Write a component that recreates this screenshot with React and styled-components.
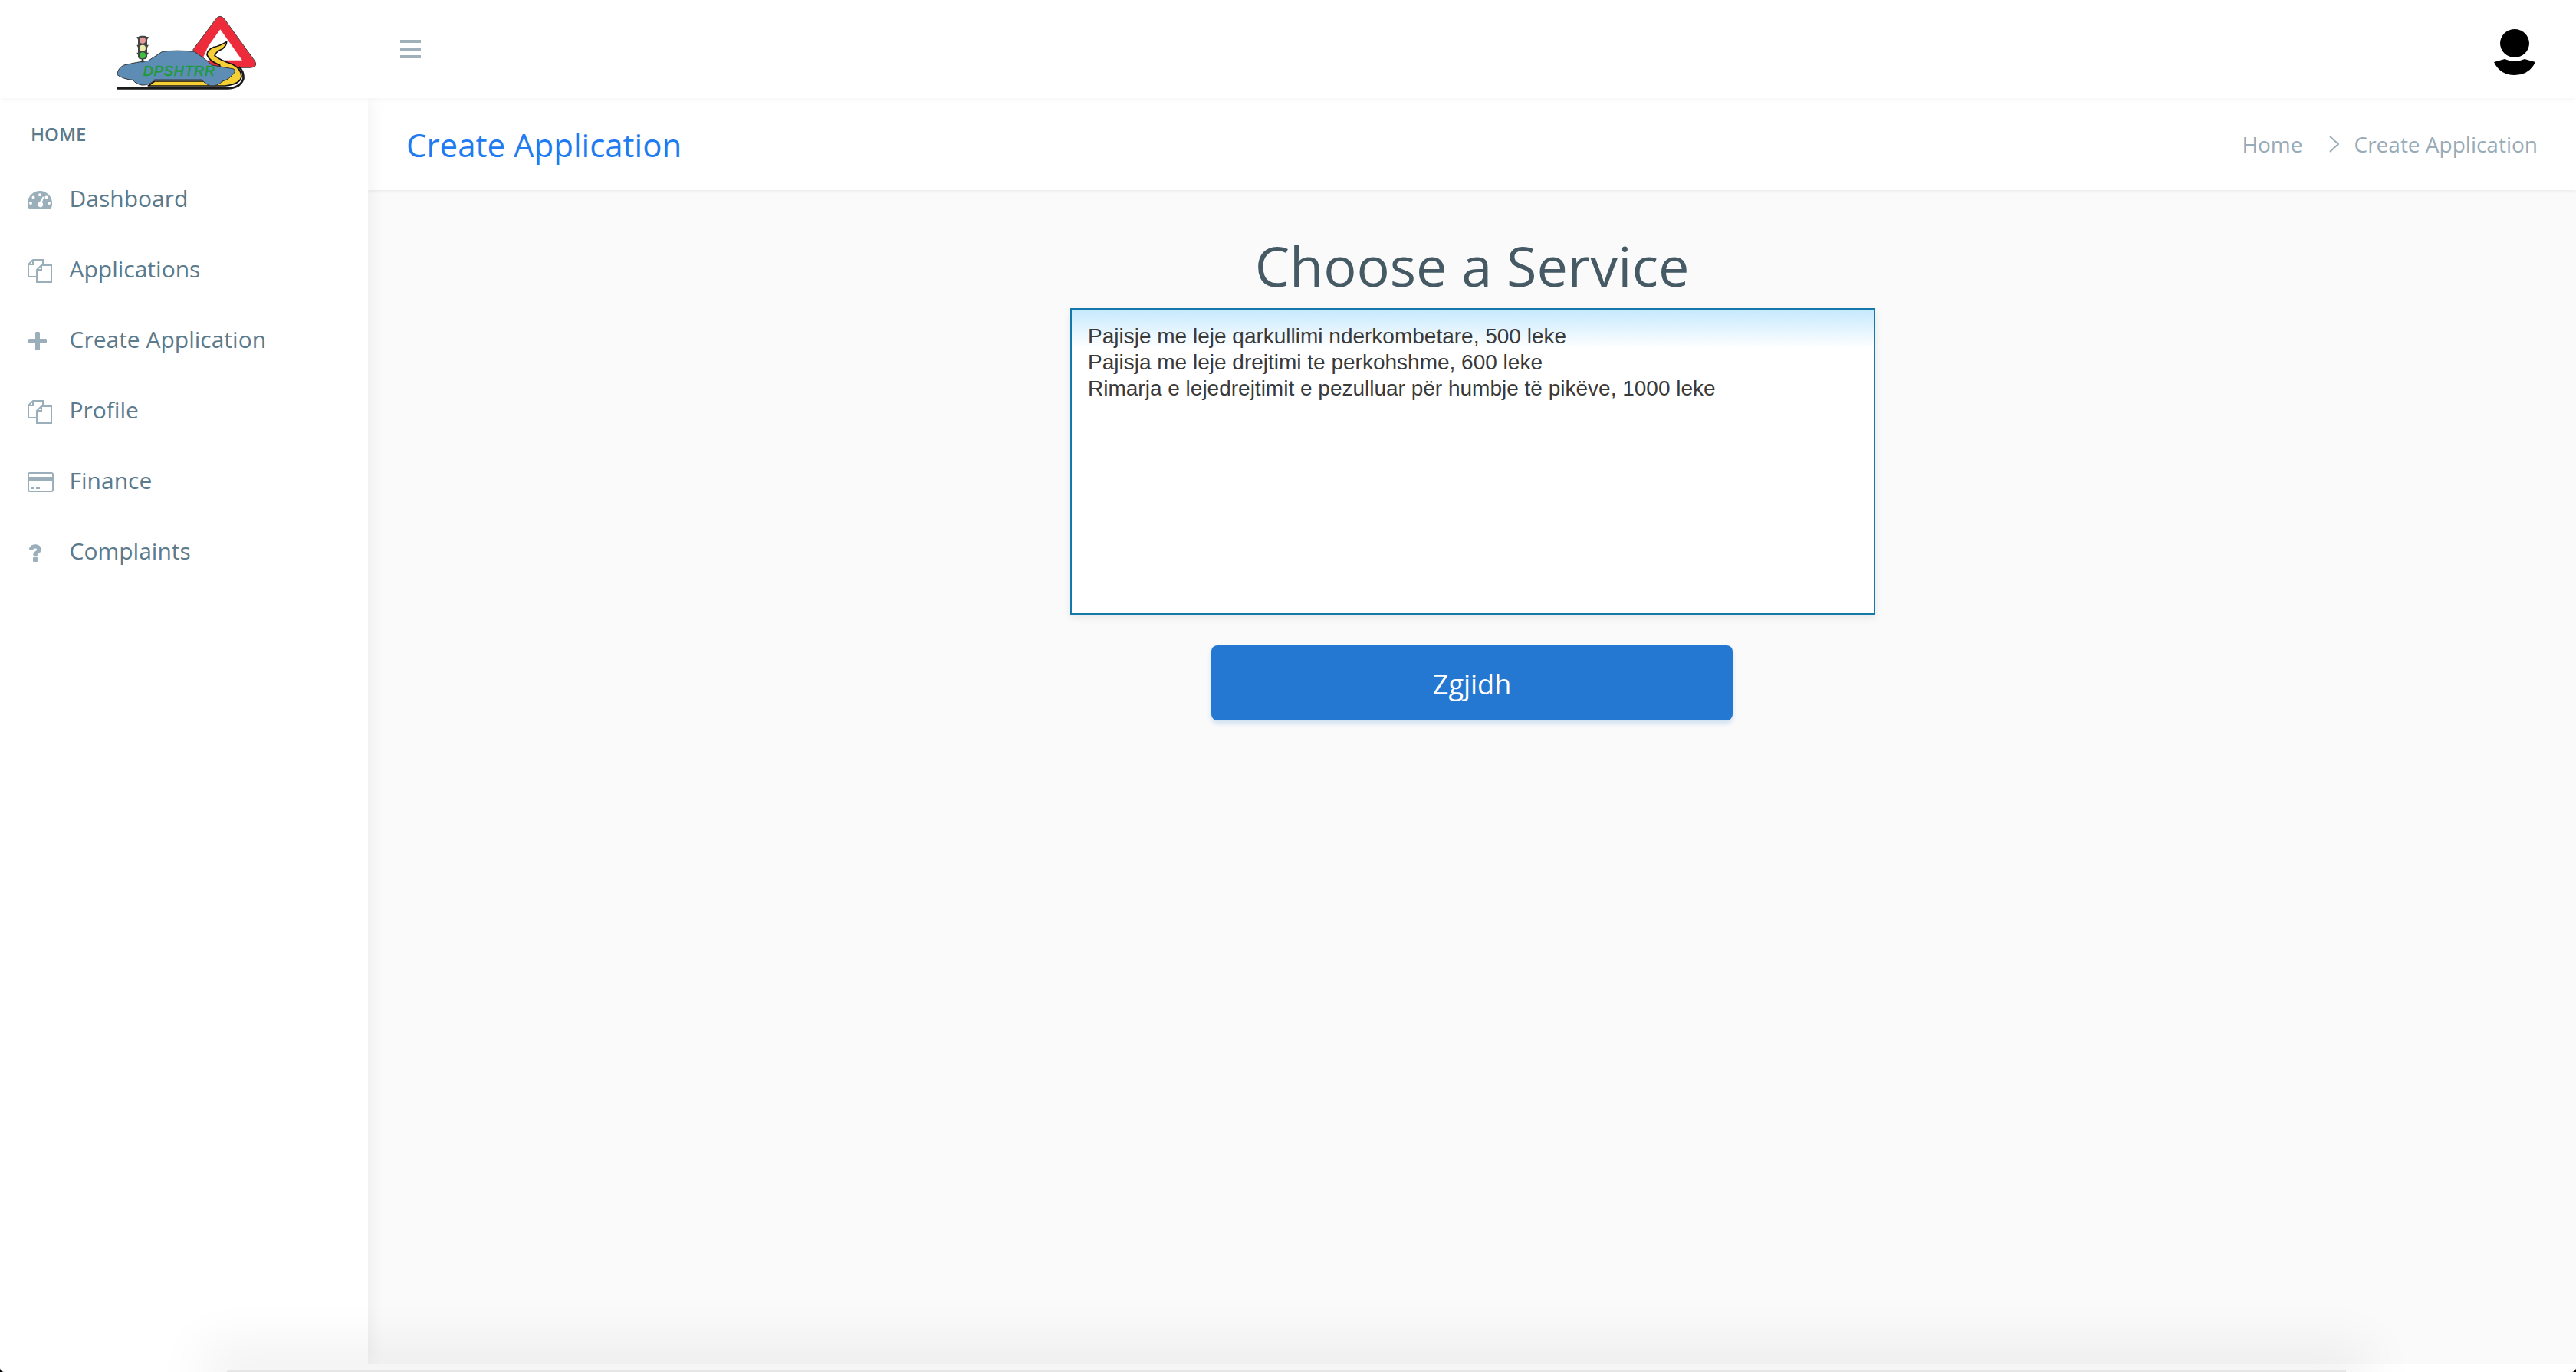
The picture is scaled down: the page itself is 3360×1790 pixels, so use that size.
import React from "react";
import styled, { createGlobalStyle } from "styled-components";

const Global = createGlobalStyle`
  html, body {
    margin: 0;
    padding: 0;
    height: 100%;
    overflow: hidden;
  }
  body {
    font-family: "Open Sans", "Noto Sans", sans-serif;
    background: #000;
  }
  #root {
    height: 100%;
  }
`;

const Page = styled.div`
  position: relative;
  height: 1790px;
  width: 3360px;
  display: flex;
  flex-direction: column;
  overflow: hidden;
  background: #fff;
  border-radius: 0 0 6px 6px;
`;

const TopBar = styled.header`
  height: 128px;
  flex: none;
  display: flex;
  align-items: center;
  background: #fff;
  position: relative;
  z-index: 3;
  box-shadow: 0 2px 6px rgba(0, 0, 0, 0.04);
`;

const Brand = styled.div`
  width: 480px;
  flex: none;
  display: flex;
  justify-content: center;
  padding-top: 7px;
  box-sizing: border-box;
`;

const Burger = styled.button`
  border: 0;
  background: none;
  padding: 0;
  margin-left: 42px;
  display: flex;
  flex-direction: column;
  gap: 6px;
  span {
    display: block;
    width: 27px;
    height: 4px;
    background: #9fb0ba;
  }
`;

const Avatar = styled.div`
  margin-left: auto;
  margin-right: 53px;
  padding-top: 8px;
  display: flex;
`;

const Body = styled.div`
  flex: 1;
  display: flex;
  min-height: 0;
`;

const Sidebar = styled.nav`
  width: 480px;
  flex: none;
  background: #fff;
  padding-top: 31px;
  box-sizing: border-box;
  position: relative;
  z-index: 2;
  box-shadow: 0 0 24px rgba(0, 0, 0, 0.07);
`;

const SectionTitle = styled.div`
  font-size: 24px;
  line-height: 32px;
  font-weight: 600;
  color: #5b7a8c;
  margin-left: 40px;
  margin-bottom: 23px;
`;

const NavItem = styled.a`
  height: 92px;
  box-sizing: border-box;
  padding: 0 0 4px 36px;
  display: flex;
  align-items: center;
  font-size: 30px;
  color: #5b7a8c;
`;

const NavIcon = styled.span`
  width: 54.5px;
  flex: none;
  display: flex;
  align-items: center;
  margin-top: 6px;
  svg {
    display: block;
  }
`;

const Main = styled.main`
  flex: 1;
  min-width: 0;
  display: flex;
  flex-direction: column;
`;

const PageHeader = styled.div`
  height: 120px;
  flex: none;
  background: #fff;
  display: flex;
  align-items: center;
  justify-content: space-between;
  padding: 0 50px;
  position: relative;
  box-shadow: 0 2px 4px rgba(0, 0, 0, 0.06);
`;

const PageTitle = styled.h1`
  margin: 0;
  font-size: 42px;
  font-weight: 400;
  color: #1e7bf0;
`;

const Crumbs = styled.div`
  display: flex;
  align-items: center;
  font-size: 28px;
  color: #98abb8;
`;

const CrumbSep = styled.span`
  margin: 0 19px 0 34px;
  display: flex;
`;

const Content = styled.div`
  flex: 1;
  display: flex;
  flex-direction: column;
  align-items: center;
  padding-top: 50px;
  background: #fafafa;
`;

const Heading = styled.h2`
  margin: 0 0 8px;
  font-size: 72px;
  line-height: 96px;
  font-weight: 400;
  color: #455a64;
`;

const ServiceList = styled.div`
  width: 1050px;
  height: 400px;
  margin-left: 2px;
  box-sizing: border-box;
  border: 2px solid #1478ab;
  background: linear-gradient(#c6e9fd 0, #fff 50px) no-repeat;
  padding: 18px 21px;
  box-shadow: 0 4px 10px rgba(0, 0, 0, 0.08);
`;

const ServiceOption = styled.div`
  font-family: "Liberation Sans", Arial, sans-serif;
  font-size: 28px;
  line-height: 34px;
  color: #3a3a3a;
`;

const SubmitButton = styled.button`
  margin-top: 40px;
  width: 680px;
  height: 98px;
  padding: 3px 0 0;
  border: 0;
  border-radius: 8px;
  background: #2478d2;
  color: #fff;
  font-family: inherit;
  font-size: 36px;
  box-shadow: 0 4px 6px rgba(36, 120, 210, 0.2);
`;

const FooterStrip = styled.div`
  flex: none;
  height: 10px;
  background: #fff;
  position: relative;
  z-index: 3;
`;

const BottomShade = styled.div`
  position: absolute;
  left: 296px;
  right: 300px;
  bottom: 0;
  height: 2px;
  background: #e6e6e6;
  z-index: 5;
  box-shadow: 0 0 70px 30px rgba(0, 0, 0, 0.065);
`;

const GaugeIcon = () => (
  <svg width="32" height="26" viewBox="0 0 32 26">
    <path
      fill="#9bafba"
      fillRule="evenodd"
      d="M16 1a16 16 0 0 1 16 16c0 3-.6 6-1.6 8H1.6C.6 23 0 20 0 17A16 16 0 0 1 16 1zm0 3.2a2 2 0 1 0 0 4 2 2 0 0 0 0-4zM7.5 7.6a2 2 0 1 0 0 4 2 2 0 0 0 0-4zm17 0a2 2 0 1 0 0 4 2 2 0 0 0 0-4zM4 15a2 2 0 1 0 0 4 2 2 0 0 0 0-4zm24 0a2 2 0 1 0 0 4 2 2 0 0 0 0-4zM19.800 8.600L15.800 15.600a3.400 3.400 0 1 0 3 .5l2.600-7z"
    />
  </svg>
);

const PagesIcon = () => (
  <svg width="32" height="31" viewBox="0 0 32 31" fill="none" stroke="#9bafba" strokeWidth="2">
    <path d="M12 23H1V7l6-6h13v7" />
    <path d="M7 1v6H1" />
    <path d="M12 30V14l6-6h13v22z" />
    <path d="M18 8v6h-6" />
  </svg>
);

const PlusIcon = () => (
  <svg width="26" height="26" viewBox="0 0 26 26">
    <path fill="#9bafba" d="M10 2a2 2 0 0 1 2-1h2a2 2 0 0 1 2 1v8h8a2 2 0 0 1 1 2v2a2 2 0 0 1-1 2h-8v8a2 2 0 0 1-2 1h-2a2 2 0 0 1-2-1v-8H2a2 2 0 0 1-1-2v-2a2 2 0 0 1 1-2h8z" />
  </svg>
);

const CardIcon = () => (
  <svg width="34" height="26" viewBox="0 0 34 26" fill="none" stroke="#9bafba">
    <rect x="1" y="1" width="32" height="24" rx="2" strokeWidth="2" />
    <path d="M1 8.500h32" strokeWidth="5" />
    <path d="M5 21h4M11 21h5" strokeWidth="2" />
  </svg>
);

const QuestionIcon = () => (
  <svg width="18" height="23" viewBox="0 0 18 24" style={{ marginLeft: 1 }}>
    <path fill="#9bafba" stroke="#9bafba" strokeWidth="1" d="M1 6.500C1.800 2.600 4.800.8 9 .8c4.600 0 8 2.400 8 6.200 0 2.800-1.500 4-3.300 5.100-1.500 1-2 1.500-2 3H6.700c0-3 1-4.300 2.900-5.400 1.300-.8 2.100-1.300 2.100-2.500 0-1.200-1-2-2.700-2-1.900 0-3 1-3.400 2.600zM6.500 18h5.300v5.500H6.500z" />
  </svg>
);

// viewBox is 3x the drawn size, traced from the reference
const Logo = () => (
  <svg width="220" height="115" viewBox="0 0 660 345">
    <path d="M455 44Q470 24 488 44L608 210Q620 232 590 235H420L365 165Z" fill="#ee2b3b" stroke="#444" strokeWidth="3" />
    <path d="M472 85L558 206H400L425 150Z" fill="#fff" />
    <path d="M497 133Q470 150 445 155Q420 165 420 185Q430 210 470 225L480 288H215L190 306H490Q550 300 555 270Q555 240 520 222Q470 205 450 188Q455 172 478 163Q497 150 497 133Z" fill="#f5cf34" stroke="#111" strokeWidth="5" strokeLinejoin="round" />
    <path d="M545 232Q566 252 562 280Q548 316 500 316H66" fill="none" stroke="#1a1a1a" strokeWidth="8" />
    <path d="M68 262Q72 235 95 225Q150 212 190 208L245 172Q300 165 370 172Q400 190 440 225Q480 232 525 240Q535 250 520 262Q505 282 480 288Q460 310 430 305Q410 298 400 282H215Q195 305 165 303Q140 298 130 283Q90 280 68 262Z" fill="#5d8db5" stroke="#333" strokeWidth="3" />
    <path d="M168 200V214" stroke="#333" strokeWidth="8" />
    <rect x="150" y="110" width="36" height="92" rx="12" fill="#444" />
    <path d="M145 114L192 114L184 130L152 130ZM145 146L192 146L184 160L152 160ZM145 176L192 176L184 190L152 190Z" fill="#444" />
    <circle cx="168" cy="128" r="12" fill="#e89a9a" />
    <circle cx="168" cy="158" r="12" fill="#ecebaa" />
    <circle cx="168" cy="187" r="12" fill="#3fbf3f" />
    <text x="170" y="268" fontFamily="Liberation Sans, sans-serif" fontStyle="italic" fontSize="54" fill="#1f9a3c" stroke="#1f9a3c" strokeWidth="2" textLength="280" lengthAdjust="spacing">DPSHTRR</text>
  </svg>
);

const UserIcon = () => (
  <svg width="54" height="60" viewBox="0 0 54 60">
    <ellipse cx="27" cy="18.500" rx="19" ry="18.500" fill="#000" />
    <path d="M0 43L14 39Q27 45 40 39L54 43Q46 60 27 60Q8 60 0 43Z" fill="#000" />
  </svg>
);

const ChevronIcon = () => (
  <svg width="14" height="22" viewBox="0 0 14 22" fill="none" stroke="#98abb8" strokeWidth="2">
    <path d="M1 1l11 10L1 21" />
  </svg>
);

const navItems = [
  { label: "Dashboard", icon: <GaugeIcon /> },
  { label: "Applications", icon: <PagesIcon /> },
  { label: "Create Application", icon: <PlusIcon /> },
  { label: "Profile", icon: <PagesIcon /> },
  { label: "Finance", icon: <CardIcon /> },
  { label: "Complaints", icon: <QuestionIcon /> },
];

const services = [
  "Pajisje me leje qarkullimi nderkombetare, 500 leke",
  "Pajisja me leje drejtimi te perkohshme, 600 leke",
  "Rimarja e lejedrejtimit e pezulluar për humbje të pikëve, 1000 leke",
];

const App = () => {
  return (
    <Page>
      <Global />
      <TopBar>
        <Brand>
          <Logo />
        </Brand>
        <Burger aria-label="menu">
          <span />
          <span />
          <span />
        </Burger>
        <Avatar>
          <UserIcon />
        </Avatar>
      </TopBar>
      <Body>
        <Sidebar>
          <SectionTitle>HOME</SectionTitle>
          {navItems.map((item) => (
            <NavItem key={item.label}>
              <NavIcon>{item.icon}</NavIcon>
              {item.label}
            </NavItem>
          ))}
        </Sidebar>
        <Main>
          <PageHeader>
            <PageTitle>Create Application</PageTitle>
            <Crumbs>
              Home
              <CrumbSep>
                <ChevronIcon />
              </CrumbSep>
              Create Application
            </Crumbs>
          </PageHeader>
          <Content>
            <Heading>Choose a Service</Heading>
            <ServiceList>
              {services.map((service) => (
                <ServiceOption key={service}>{service}</ServiceOption>
              ))}
            </ServiceList>
            <SubmitButton>Zgjidh</SubmitButton>
          </Content>
        </Main>
      </Body>
      <FooterStrip />
      <BottomShade />
    </Page>
  );
};

export default App;
